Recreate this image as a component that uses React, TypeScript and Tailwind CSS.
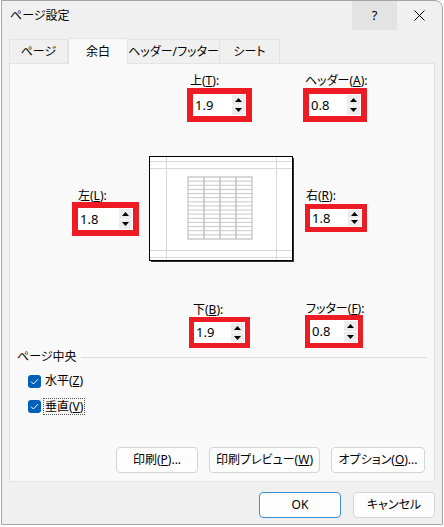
import React from "react";

function Tri({ up }: { up: boolean }) {
  return (
    <svg width="7" height="4" viewBox="0 0 7 4">
      <path d={up ? "M0 4 L3.5 0 L7 4Z" : "M0 0 L3.5 4 L7 0Z"} fill="#000" />
    </svg>
  );
}

function Spin({ value, outer }: { value: string; outer: string }) {
  return (
    <div className={`flex border-[#ed1c24] bg-white ${outer}`}>
      <div className="flex flex-1 items-center pl-[2px] text-[13px] leading-none text-black">{value}</div>
      <div className="my-[1px] mr-[1px] flex w-[13px] flex-col gap-[1px]">
        <div className="flex flex-1 items-center justify-center bg-[#ececec]">
          <Tri up />
        </div>
        <div className="flex flex-1 items-center justify-center bg-[#ececec]">
          <Tri up={false} />
        </div>
      </div>
    </div>
  );
}

function Check() {
  return (
    <div className="flex h-[13px] w-[13px] items-center justify-center rounded-[3px] bg-[#005fb8]">
      <svg width="9" height="7" viewBox="0 0 9 7">
        <path d="M1 3.6 L3.4 6 L8 1.2" stroke="#fff" strokeWidth="1" fill="none" />
      </svg>
    </div>
  );
}

function Preview() {
  const rows = [];
  for (let i = 1; i < 15; i++) {
    const y = 21 + (62 / 15) * i;
    rows.push(<line key={i} x1={39} x2={103} y1={y} y2={y} stroke="#c8c8c8" strokeWidth="1" />);
  }
  return (
    <svg width="146" height="107" viewBox="0 0 146 107">
      <rect x="0.5" y="0.5" width="143" height="104" fill="#fff" stroke="#000" />
      <line x1="144.5" y1="2" x2="144.5" y2="106" stroke="#333" />
      <line x1="2" y1="105.5" x2="145" y2="105.5" stroke="#333" />
      <line x1="1" x2="143" y1="5.5" y2="5.5" stroke="#d8d8d8" />
      <line x1="1" x2="143" y1="12.5" y2="12.5" stroke="#d8d8d8" />
      <line x1="1" x2="143" y1="94.5" y2="94.5" stroke="#d8d8d8" />
      <line x1="1" x2="143" y1="101.5" y2="101.5" stroke="#d8d8d8" />
      <line x1="17.5" x2="17.5" y1="1" y2="104" stroke="#d8d8d8" />
      <line x1="127.5" x2="127.5" y1="1" y2="104" stroke="#d8d8d8" />
      <rect x="39" y="21" width="64" height="62" fill="#fff" stroke="#c0c0c0" strokeWidth="1.2" />
      {rows}
      <line x1="55" x2="55" y1="21" y2="83" stroke="#c0c0c0" strokeWidth="1.5" />
      <line x1="71" x2="71" y1="21" y2="83" stroke="#c0c0c0" strokeWidth="1.5" />
      <line x1="87" x2="87" y1="21" y2="83" stroke="#c0c0c0" strokeWidth="1.5" />
    </svg>
  );
}

function Btn({ children, w, extra = "" }: { children: React.ReactNode; w: string; extra?: string }) {
  return (
    <div
      className={`flex h-[26px] items-center justify-center rounded-[4px] border bg-[#fdfdfd] text-[12px] text-black ${w} ${extra}`}
    >
      {children}
    </div>
  );
}

export default function App() {
  return (
    <div className="h-[527px] w-[444px] overflow-hidden bg-white font-['Noto_Sans','Noto_Sans_CJK_JP',sans-serif] text-[12px] text-black [font-feature-settings:'palt']">
      <div className="ml-[1px] flex h-[525px] w-[442px] flex-col rounded-tr-[8px] border border-[#a6a6a6] bg-[#f0f0f0]">
        {/* title bar */}
        <div className="flex h-[29px] items-center">
          <div className="flex-1 pl-[8px] text-[12px]">ページ設定</div>
          <div className="flex h-[29px] w-[45px] items-center justify-center bg-[#e3e3e3] text-[13px]">?</div>
          <div className="flex h-[29px] w-[45px] items-center justify-center">
            <svg width="11" height="11" viewBox="0 0 11 11">
              <path d="M0.5 0.5 L10.5 10.5 M10.5 0.5 L0.5 10.5" stroke="#000" strokeWidth="1" />
            </svg>
          </div>
        </div>
        {/* tabs */}
        <div className="ml-[7px] mt-[8px] flex h-[25px] items-end">
          <div className="flex h-[24px] w-[59px] items-center justify-center border border-b-0 border-[#e3e3e3] bg-[#f0f0f0]">
            ページ
          </div>
          <div className="relative z-10 -mb-[1px] flex h-[26px] w-[60px] items-center justify-center border border-b-0 border-[#e3e3e3] bg-[#f9f9f9]">
            余白
          </div>
          <div className="flex h-[24px] w-[92px] items-center justify-center border border-b-0 border-l-0 border-[#e3e3e3] bg-[#f0f0f0]">
            ヘッダー/フッター
          </div>
          <div className="flex h-[24px] w-[60px] items-center justify-center border border-b-0 border-l-0 border-[#e3e3e3] bg-[#f0f0f0]">
            シート
          </div>
        </div>
        {/* panel */}
        <div className="ml-[7px] flex h-[419px] w-[426px] flex-col border border-[#e3e3e3] bg-[#f9f9f9]">
          {/* row 1 */}
          <div className="ml-[177px] mt-[10px] flex">
            <div className="flex flex-col">
              <div className="h-[14px] pl-[3px] leading-[14px]">
                上(<span className="underline">T</span>):
              </div>
              <Spin value="1.9" outer="w-[65px] h-[34px] border-[6px]" />
            </div>
            <div className="ml-[51px] flex flex-col">
              <div className="h-[14px] pl-[2px] leading-[14px]">
                ヘッダー(<span className="underline">A</span>):
              </div>
              <Spin value="0.8" outer="w-[64px] h-[34px] border-[6px]" />
            </div>
          </div>
          {/* row 2 */}
          <div className="ml-[62px] mt-[34px] flex items-start">
            <div className="mt-[33px] flex flex-col">
              <div className="h-[13px] pl-[6px] leading-[13px]">
                左(<span className="underline">L</span>):
              </div>
              <Spin value="1.8" outer="w-[67px] h-[34px] border-[6px]" />
            </div>
            <div className="ml-[10px]">
              <Preview />
            </div>
            <div className="ml-[10px] mt-[33px] flex flex-col">
              <div className="h-[14px] pl-[1px] leading-[14px]">
                右(<span className="underline">R</span>):
              </div>
              <Spin value="1.8" outer="mt-[1px] w-[62px] h-[28px] border-[5px]" />
            </div>
          </div>
          {/* row 3 */}
          <div className="ml-[179px] mt-[40px] flex">
            <div className="flex flex-col">
              <div className="h-[14px] pl-[4px] leading-[14px]">
                下(<span className="underline">B</span>):
              </div>
              <Spin value="1.9" outer="w-[61px] h-[31px] border-[5px]" />
            </div>
            <div className="ml-[55px] flex flex-col">
              <div className="h-[12px] pl-[1px] leading-[12px]">
                フッター(<span className="underline">F</span>):
              </div>
              <Spin value="0.8" outer="w-[58px] h-[33px] border-[5px]" />
            </div>
          </div>
          {/* section */}
          <div className="ml-[7px] mr-[7px] mt-[2px] flex h-[14px] items-center">
            <span className="leading-[14px]">ページ中央</span>
            <div className="ml-[4px] h-px flex-1 bg-[#dddddd]" />
          </div>
          <div className="ml-[18px] mt-[10px] flex items-center">
            <Check />
            <span className="ml-[4px] leading-[14px]">
              水平(<span className="underline">Z</span>)
            </span>
          </div>
          <div className="ml-[18px] mt-[10px] flex items-center">
            <Check />
            <span className="ml-[2px] border border-dotted border-[#555] px-[1px] leading-[15px]">
              垂直(<span className="underline">V</span>)
            </span>
          </div>
          {/* buttons */}
          <div className="ml-[106px] mt-[32px] flex gap-[11px]">
            <Btn w="w-[82px]" extra="border-[#d4d4d4]">
              印刷(<span className="underline">P</span>)...
            </Btn>
            <Btn w="w-[111px]" extra="border-[#d4d4d4]">
              印刷プレビュー(<span className="underline">W</span>)
            </Btn>
            <Btn w="w-[94px]" extra="border-[#d4d4d4]">
              オプション(<span className="underline">O</span>)...
            </Btn>
          </div>
        </div>
        {/* footer */}
        <div className="ml-[257px] mt-[10px] flex gap-[12px]">
          <Btn w="w-[82px]" extra="border-[#3f8fd8]">
            OK
          </Btn>
          <Btn w="w-[82px]" extra="border-[#d4d4d4]">
            キャンセル
          </Btn>
        </div>
      </div>
    </div>
  );
}
